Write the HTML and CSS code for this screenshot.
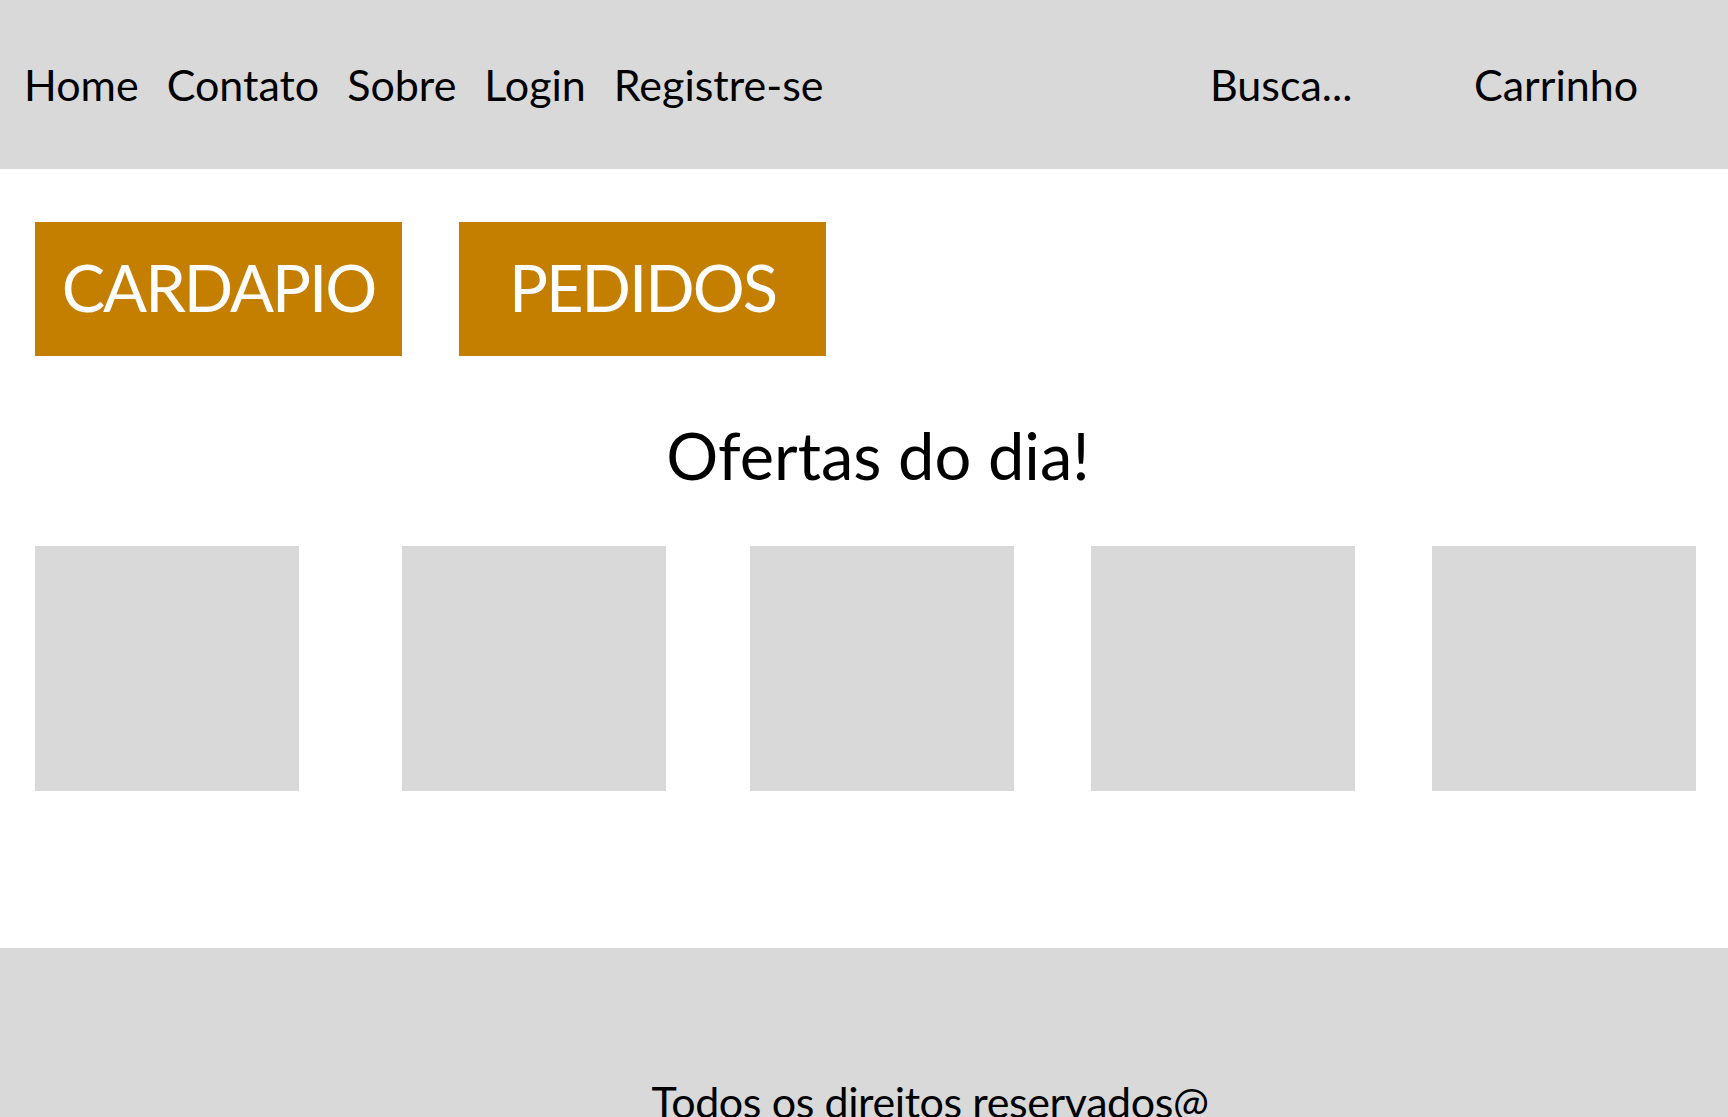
FILE: index.html
```html
<!DOCTYPE html>
<html lang="pt-BR">
<head>
<meta charset="utf-8">
<title>Ofertas do dia</title>
<link rel="stylesheet" href="styles.css">
</head>
<body>
<header class="topbar">
  <nav class="nav">
    <a class="nav-link" href="#">Home</a>
    <a class="nav-link" href="#">Contato</a>
    <a class="nav-link" href="#">Sobre</a>
    <a class="nav-link" href="#">Login</a>
    <a class="nav-link" href="#">Registre-se</a>
  </nav>
  <div class="search">Busca...</div>
  <div class="cart">Carrinho</div>
</header>
<main class="content">
  <div class="actions">
    <a class="action-btn" href="#">CARDAPIO</a>
    <a class="action-btn" href="#">PEDIDOS</a>
  </div>
  <h1 class="title">Ofertas do dia!</h1>
  <div class="offers">
    <div class="offer"></div>
    <div class="offer offer-wide"></div>
    <div class="offer offer-mid"></div>
    <div class="offer"></div>
    <div class="offer"></div>
  </div>
</main>
<footer class="footer">
  <p class="footer-text">Todos os direitos reservados@</p>
</footer>
</body>
</html>
```
FILE: styles.css
```css
* { box-sizing: border-box; }
body {
  margin: 0;
  font-family: "Lato", "Noto Sans", sans-serif;
  color: #000;
  background: #fff;
}
.topbar {
  height: 169px;
  background: #d9d9d9;
  display: flex;
  align-items: center;
  padding-left: 24px;
  font-size: 43px;
  line-height: 1.2;
}
.nav {
  flex: 1;
  display: flex;
  gap: 28px;
}
.nav-link {
  color: #000;
  text-decoration: none;
}
.search { width: 264px; }
.cart { width: 254px; }
.content {
  padding: 53px 35px 0;
}
.actions {
  display: flex;
  gap: 57px;
}
.action-btn {
  width: 367px;
  height: 134px;
  background: #c47f00;
  color: #fff;
  text-decoration: none;
  font-size: 65px;
  letter-spacing: -2px;
  line-height: 1.2;
  display: flex;
  align-items: center;
  justify-content: center;
  padding-bottom: 4px;
}
.title {
  margin: 60px 0 0;
  padding-left: 28px;
  text-align: center;
  font-size: 65px;
  font-weight: 400;
  line-height: 1.2;
}
.offers {
  display: flex;
  gap: 77px;
  margin-top: 52px;
}
.offer {
  width: 264px;
  height: 245px;
  background: #d9d9d9;
  flex: none;
}
.offer-wide { margin-left: 26px; }
.offer-mid { margin-left: 7px; }
.footer {
  margin-top: 157px;
  background: #d9d9d9;
  height: 260px;
  padding-top: 128px;
  padding-left: 132px;
}
.footer-text {
  margin: 0;
  text-align: center;
  font-size: 43px;
  letter-spacing: -0.4px;
  line-height: 1.2;
}
```
